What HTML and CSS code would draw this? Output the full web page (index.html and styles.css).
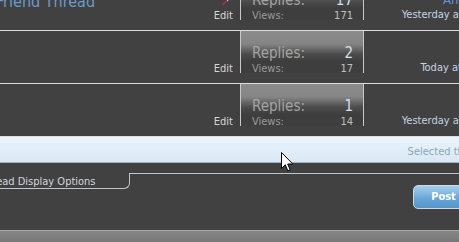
FILE: index.html
```html
<!DOCTYPE html>
<html>
<head>
<meta charset="utf-8">
<link rel="stylesheet" href="styles.css">
</head>
<body>
<div class="page">
  <div class="threads">
    <div class="row">
      <div class="main">
        <div class="titleline">
          <a class="title">Friend Thread</a>
          <svg class="icon" width="8" height="6" viewBox="0 0 8 6"><path d="M1 5 L6 1" stroke="#b0303a" stroke-width="1.6" fill="none"/><path d="M6 1 L7.5 0" stroke="#e8e8e8" stroke-width="1"/></svg>
        </div>
        <span class="edit">Edit</span>
      </div>
      <div class="stats">
        <div class="rep"><span>Replies:</span><span class="n">17</span></div>
        <div class="views"><span>Views:</span><span class="vn">171</span></div>
      </div>
      <div class="last">
        <a class="poster">Anonymous</a>
        <span class="date">Yesterday at 11:42 PM</span>
      </div>
    </div>
    <div class="row">
      <div class="main">
        <div class="titleline"><a class="title"></a></div>
        <span class="edit">Edit</span>
      </div>
      <div class="stats">
        <div class="rep"><span>Replies:</span><span class="n">2</span></div>
        <div class="views"><span>Views:</span><span class="vn">17</span></div>
      </div>
      <div class="last">
        <a class="poster"></a>
        <span class="date">Today at 10:41 AM</span>
      </div>
    </div>
    <div class="row">
      <div class="main">
        <div class="titleline"><a class="title"></a></div>
        <span class="edit">Edit</span>
      </div>
      <div class="stats">
        <div class="rep"><span>Replies:</span><span class="n">1</span></div>
        <div class="views"><span>Views:</span><span class="vn">14</span></div>
      </div>
      <div class="last">
        <a class="poster"></a>
        <span class="date">Yesterday at 09:15 PM</span>
      </div>
    </div>
  </div>
  <div class="selbar"><span>Selected threads: 0</span></div>
  <div class="options">
    <div class="tab">Thread Display Options</div>
    <div class="tabline"><button class="post">Post New Thread</button></div>
  </div>
  <div class="footer"></div>
</div>
<svg class="cursor" width="13" height="21" viewBox="0 0 13 21"><path d="M0.5 0.5 L0.5 16.5 L4.3 12.8 L6.8 18.8 L9.2 17.8 L6.7 12 L11.8 12 Z" fill="#fff" stroke="#000" stroke-width="1"/></svg>
</body>
</html>
```

FILE: styles.css
```css
html, body {
  margin: 0;
  padding: 0;
  overflow: hidden;
  background: #414141;
}
body {
  font-family: "DejaVu Sans Condensed", "DejaVu Sans", sans-serif;
  width: 459px;
  height: 242px;
  position: relative;
}
.page {
  width: 560px;
}
.threads {
  margin-top: -22px;
}
.row {
  display: grid;
  grid-template-columns: 240px 124px 1fr;
  height: 52px;
  border-bottom: 1px solid #dedede;
}
.main {
  display: flex;
  flex-direction: column;
  padding: 15px 7px 0 0;
}
.titleline {
  display: flex;
  justify-content: space-between;
  align-items: flex-start;
  height: 16px;
}
.title {
  font-size: 16px;
  line-height: 16px;
  margin-top: 1px;
  color: #6b9cca;
  margin-left: -4px;
  white-space: nowrap;
}
.icon {
  margin-top: 7px;
  margin-right: 4px;
}
.edit {
  align-self: flex-end;
  font-size: 11px;
  line-height: 13px;
  color: #d6d6d6;
}
.stats {
  height: 42px;
  box-sizing: border-box;
  border-left: 1px solid #c9c9c9;
  border-right: 1px solid #c9c9c9;
  padding: 13px 10px 0 11px;
  background: linear-gradient(to bottom, #8b8b8b 0, #858585 13px, #4c4c4c 23px, #3e3e3e 30px, #3e3e3e 100%);
}
.rep {
  display: flex;
  justify-content: space-between;
  font-size: 15px;
  line-height: 18px;
  color: #a4a4a4;
}
.rep .n {
  color: #d3e2ee;
}
.views {
  display: flex;
  justify-content: space-between;
  font-size: 11px;
  line-height: 13px;
  color: #9a9a9a;
}
.views .vn {
  color: #c0c0c0;
}
.last {
  display: flex;
  flex-direction: column;
  align-items: flex-end;
  padding: 13px 48px 0 0;
}
.poster {
  font-size: 13px;
  line-height: 17px;
  height: 17px;
  color: #5d9cd8;
}
.date {
  font-size: 11px;
  line-height: 13px;
  color: #c4d4e2;
  white-space: nowrap;
}
.selbar {
  height: 25px;
  border-bottom: 1px solid #a3b3c0;
  background: linear-gradient(to bottom, #eaf4fc, #d9e8f4);
  text-align: right;
  padding-right: 56px;
  font-size: 11px;
  line-height: 13px;
  color: #8ea6b8;
}
.selbar span {
  display: inline-block;
  padding-top: 8px;
}
.options {
  display: flex;
  margin-top: 10px;
}
.tab {
  margin-left: -26px;
  padding: 2px 33px 0 6px;
  box-sizing: border-box;
  height: 16px;
  border-right: 1px solid #bcc6ce;
  border-bottom: 1px solid #bcc6ce;
  border-bottom-right-radius: 6px;
  font-size: 11px;
  line-height: 13px;
  color: #d0d6dc;
  white-space: nowrap;
}
.tabline {
  flex: 1;
  border-top: 1px solid #bcc6ce;
  display: flex;
  justify-content: flex-end;
  padding: 11px 16px 0 0;
}
.post {
  height: 24px;
  padding: 0 17px;
  border: 1px solid #c7dbea;
  border-radius: 5px;
  background: linear-gradient(to bottom, #a4d0ec, #6aa7d7 55%, #5595cc);
  color: #fff;
  font-family: inherit;
  font-weight: bold;
  font-size: 11px;
  line-height: 20px;
}
.footer {
  margin-top: 21px;
  height: 20px;
  border-top: 1px solid #a9a9a9;
  background: linear-gradient(to bottom, #868686, #6c6c6c);
}
.cursor {
  position: absolute;
  left: 281px;
  top: 152px;
}
```
